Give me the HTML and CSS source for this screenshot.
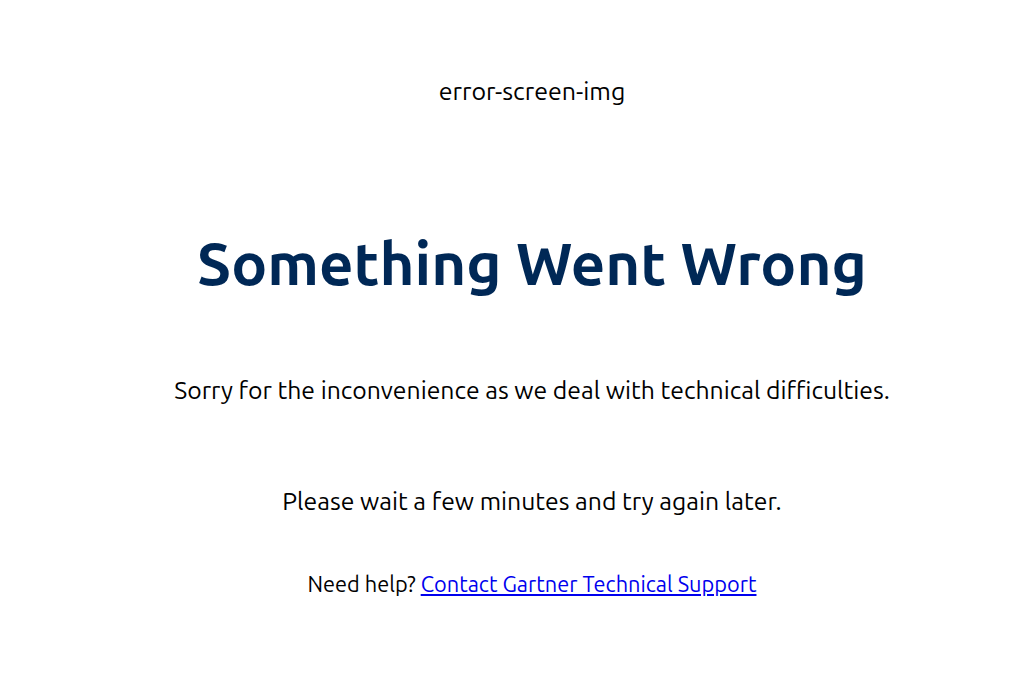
FILE: index.html
```html
<!DOCTYPE html>
<html lang="en">
<head>
<meta charset="utf-8">
<title>Something Went Wrong</title>
<link rel="stylesheet" href="styles.css">
</head>
<body>
<main class="error-page">
  <div class="error-img">error-screen-img</div>
  <h1 class="error-title">Something Went Wrong</h1>
  <p class="error-text error-sorry">Sorry for the inconvenience as we deal with technical difficulties.</p>
  <p class="error-text error-wait">Please wait a few minutes and try again later.</p>
  <p class="error-help">Need help? <a href="#">Contact Gartner Technical Support</a></p>
</main>
</body>
</html>
```
FILE: styles.css
```css
html, body {
  margin: 0;
  padding: 0;
  background: #ffffff;
}
body {
  font-family: "Ubuntu", "Open Sans", "Noto Sans", sans-serif;
  color: #000000;
}
.error-page {
  display: flex;
  flex-direction: column;
  align-items: center;
  text-align: center;
  padding: 76px 0 0 40px;
}
.error-img {
  font-size: 25px;
  line-height: 30px;
}
.error-title {
  margin: 122px 0 0;
  font-size: 60px;
  line-height: 70px;
  font-weight: 700;
  color: #002856;
}
.error-text {
  margin: 0;
  font-size: 24.75px;
  line-height: 30px;
}
.error-sorry {
  margin-top: 77px;
}
.error-wait {
  margin-top: 81px;
}
.error-help {
  margin: 54px 0 0;
  font-size: 21.75px;
  line-height: 28px;
}
.error-help a {
  color: #0000ee;
}
```
